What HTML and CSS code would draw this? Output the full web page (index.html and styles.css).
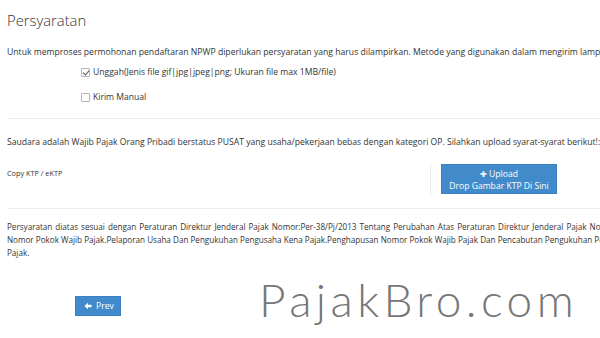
FILE: index.html
```html
<!DOCTYPE html>
<html>
<head>
<meta charset="utf-8">
<link rel="stylesheet" href="styles.css">
</head>
<body>
<div class="page">
  <h1 class="title">Persyaratan</h1>
  <p class="intro">Untuk memproses permohonan pendaftaran NPWP diperlukan persyaratan yang harus dilampirkan. Metode yang digunakan dalam mengirim lampiran adalah sebagai berikut:</p>
  <div class="options">
    <label class="opt"><span class="box checked"></span>Unggah(Jenis file gif|jpg|jpeg|png; Ukuran file max 1MB/file)</label>
    <label class="opt"><span class="box"></span>Kirim Manual</label>
  </div>
  <hr class="rule">
  <p class="status">Saudara adalah Wajib Pajak Orang Pribadi berstatus PUSAT yang usaha/pekerjaan bebas dengan kategori OP. Silahkan upload syarat-syarat berikut!:</p>
  <div class="doc-row">
    <div class="doc-label">Copy KTP / eKTP</div>
    <div class="doc-upload">
      <div class="upload-btn">
        <div><span class="plus">✚</span>Upload</div>
        <div>Drop Gambar KTP Di Sini</div>
      </div>
    </div>
  </div>
  <hr class="rule rule2">
  <div class="note">
    <span class="jl jl1">Persyaratan diatas sesuai dengan Peraturan Direktur Jenderal Pajak Nomor:Per-38/Pj/2013 Tentang Perubahan Atas Peraturan Direktur Jenderal Pajak Nomor PER-20/PJ/2013</span>
    <span class="jl jl2">Nomor Pokok Wajib Pajak.Pelaporan Usaha Dan Pengukuhan Pengusaha Kena Pajak.Penghapusan Nomor Pokok Wajib Pajak Dan Pencabutan Pengukuhan Pengusaha Kena</span>
    <span class="ll">Pajak.</span>
  </div>
  <div class="footer">
    <div class="prev-btn">
      <svg class="arrow" viewBox="0 0 10 10" width="8" height="8"><path d="M0.5 5 L5 0.8 L5 3.3 L9.5 3.3 L9.5 6.7 L5 6.7 L5 9.2 Z" fill="#fff"/></svg>
      <span>Prev</span>
    </div>
    <div class="watermark">PajakBro.com</div>
  </div>
</div>
</body>
</html>
```
FILE: styles.css
```css
html, body {
  margin: 0;
  padding: 0;
  background: #fff;
  overflow: hidden;
}
body {
  font-family: "Open Sans", "Liberation Sans", sans-serif;
  color: #333;
}
.page {
  width: 700px;
  padding: 0 0 0 7px;
}
.title {
  margin: 0;
  padding-top: 8px;
  font-size: 14.8px;
  font-weight: 300;
  line-height: 24px;
  color: #333;
}
.intro {
  margin: 14px 0 0;
  font-size: 8.65px;
  line-height: 13px;
  white-space: nowrap;
}
.options {
  display: flex;
  flex-direction: column;
  gap: 12px;
  margin: 7px 0 0 74px;
}
.opt {
  display: flex;
  align-items: center;
  font-size: 8.6px;
  line-height: 13px;
}
.box {
  width: 9px;
  height: 9px;
  border: 1px solid #b5b5b5;
  border-radius: 1px;
  margin-right: 3px;
  position: relative;
  box-sizing: border-box;
}
.box.checked::after {
  content: "";
  position: absolute;
  left: 2px;
  top: 0px;
  width: 3px;
  height: 5px;
  border: solid #555;
  border-width: 0 1px 1px 0;
  transform: rotate(40deg);
}
.rule {
  border: 0;
  border-top: 1px solid #eee;
  margin: 14px 0 0;
}
.status {
  margin: 17px 0 0;
  font-size: 8.6px;
  line-height: 13px;
  white-space: nowrap;
}
.doc-row {
  display: flex;
  margin-top: 15px;
}
.doc-label {
  width: 423px;
  font-size: 7.3px;
  line-height: 10px;
  padding-top: 4px;
}
.doc-upload {
  border-left: 1px solid #eee;
  padding-left: 10px;
  padding-bottom: 2px;
}
.upload-btn {
  width: 116px;
  height: 30px;
  background: #428bca;
  border: 1px solid #3a80c2;
  box-sizing: border-box;
  color: #fff;
  font-size: 8.6px;
  line-height: 12px;
  text-align: center;
  padding-top: 3px;
}
.plus {
  font-size: 8px;
  margin-right: 2px;
}
.rule2 {
  margin-top: 12px;
}
.note {
  margin: 11px 0 0;
  font-size: 8.1px;
  line-height: 13px;
}
.jl {
  display: block;
  text-align: justify;
  text-align-last: justify;
}
.jl1 {
  width: 670px;
}
.jl2 {
  width: 650px;
}
.ll {
  display: block;
}
.footer {
  position: relative;
  margin-top: 34px;
  height: 40px;
}
.prev-btn {
  display: inline-flex;
  align-items: center;
  gap: 4px;
  margin-left: 68px;
  width: 46px;
  height: 20px;
  box-sizing: border-box;
  padding-left: 8px;
  background: #428bca;
  border: 1px solid #3a80c2;
  color: #fff;
  font-size: 8.6px;
}
.watermark {
  position: absolute;
  left: 252px;
  top: -16px;
  font-family: "Lato", sans-serif;
  font-weight: 300;
  font-size: 46px;
  line-height: 46px;
  color: #777;
  letter-spacing: 4.4px;
  white-space: nowrap;
}
```
